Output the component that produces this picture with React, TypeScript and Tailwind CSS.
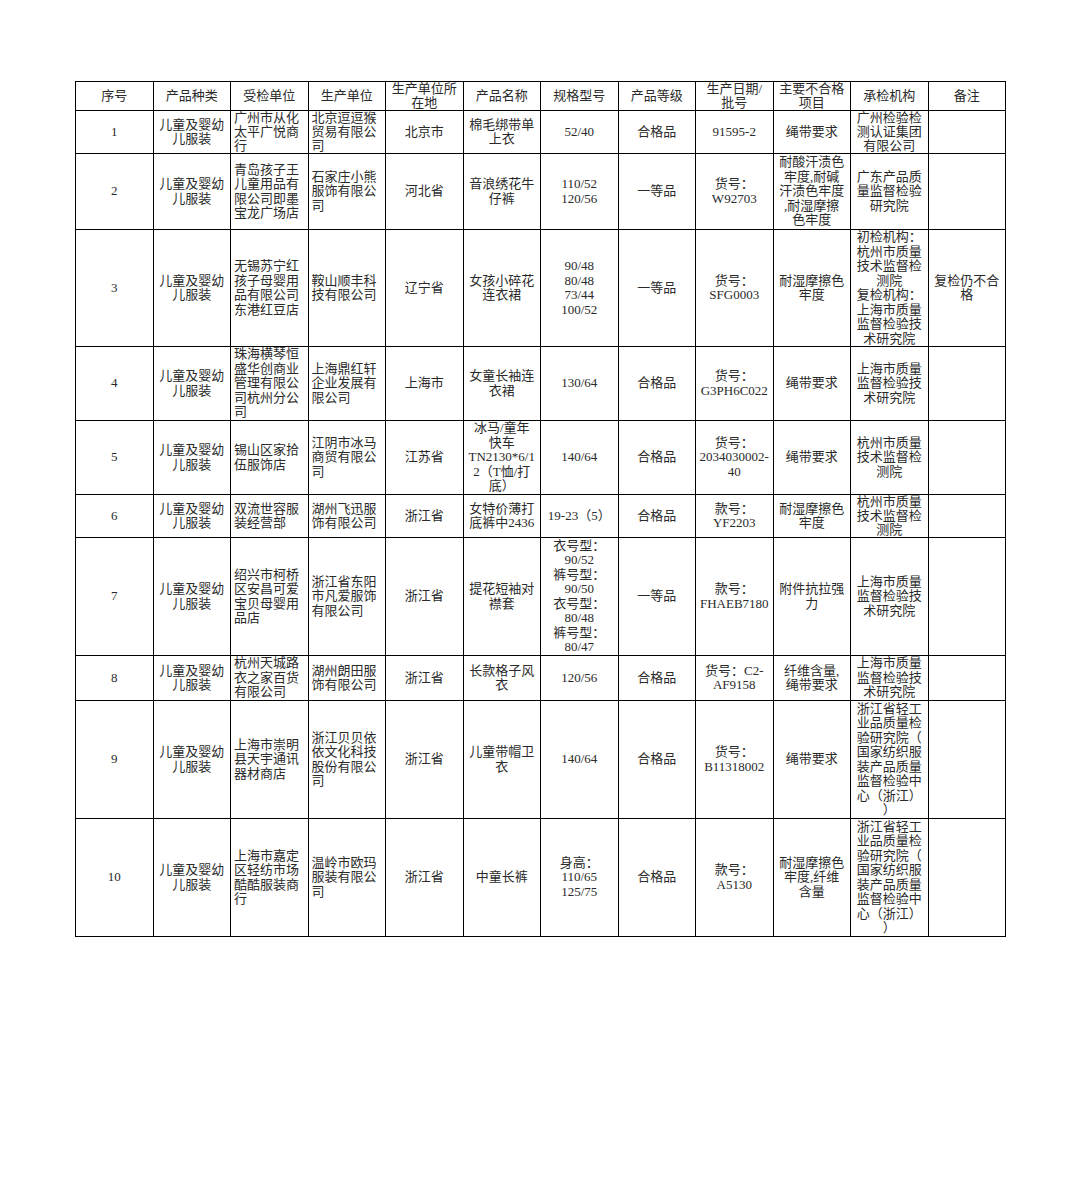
import React from "react";

const CAT = ["儿童及婴幼", "儿服装"];
const ZJ = ["浙江省轻工", "业品质量检", "验研究院（", "国家纺织服", "装产品质量", "监督检验中", "心（浙江）", "）"];
const SH = ["上海市质量", "监督检验技", "术研究院"];
const HZ = ["杭州市质量", "技术监督检", "测院"];

const ROW_H = [29, 43, 76, 117, 74, 74, 43, 118, 45, 118, 118];

const header: string[][] = [
  ["序号"],
  ["产品种类"],
  ["受检单位"],
  ["生产单位"],
  ["生产单位所", "在地"],
  ["产品名称"],
  ["规格型号"],
  ["产品等级"],
  ["生产日期/", "批号"],
  ["主要不合格", "项目"],
  ["承检机构"],
  ["备注"],
];

const rows: string[][][] = [
  [["1"], CAT, ["广州市从化", "太平广悦商", "行"], ["北京逗逗猴", "贸易有限公", "司"], ["北京市"], ["棉毛绑带单", "上衣"], ["52/40"], ["合格品"], ["91595-2"], ["绳带要求"], ["广州检验检", "测认证集团", "有限公司"], []],
  [["2"], CAT, ["青岛孩子王", "儿童用品有", "限公司即墨", "宝龙广场店"], ["石家庄小熊", "服饰有限公", "司"], ["河北省"], ["音浪绣花牛", "仔裤"], ["110/52", "120/56"], ["一等品"], ["货号：", "W92703"], ["耐酸汗渍色", "牢度,耐碱", "汗渍色牢度", ",耐湿摩擦", "色牢度"], ["广东产品质", "量监督检验", "研究院"], []],
  [["3"], CAT, ["无锡苏宁红", "孩子母婴用", "品有限公司", "东港红豆店"], ["鞍山顺丰科", "技有限公司"], ["辽宁省"], ["女孩小碎花", "连衣裙"], ["90/48", "80/48", "73/44", "100/52"], ["一等品"], ["货号：", "SFG0003"], ["耐湿摩擦色", "牢度"], ["初检机构：", "杭州市质量", "技术监督检", "测院", "复检机构：", "上海市质量", "监督检验技", "术研究院"], ["复检仍不合", "格"]],
  [["4"], CAT, ["珠海横琴恒", "盛华创商业", "管理有限公", "司杭州分公", "司"], ["上海鼎红轩", "企业发展有", "限公司"], ["上海市"], ["女童长袖连", "衣裙"], ["130/64"], ["合格品"], ["货号：", "G3PH6C022"], ["绳带要求"], SH, []],
  [["5"], CAT, ["锡山区家拾", "伍服饰店"], ["江阴市冰马", "商贸有限公", "司"], ["江苏省"], ["冰马/童年", "快车", "TN2130*6/1", "2（T恤/打", "底）"], ["140/64"], ["合格品"], ["货号：", "2034030002-", "40"], ["绳带要求"], HZ, []],
  [["6"], CAT, ["双流世容服", "装经营部"], ["湖州飞迅服", "饰有限公司"], ["浙江省"], ["女特价薄打", "底裤中2436"], ["19-23（5）"], ["合格品"], ["款号：", "YF2203"], ["耐湿摩擦色", "牢度"], HZ, []],
  [["7"], CAT, ["绍兴市柯桥", "区安昌可爱", "宝贝母婴用", "品店"], ["浙江省东阳", "市凡爱服饰", "有限公司"], ["浙江省"], ["提花短袖对", "襟套"], ["衣号型：", "90/52", "裤号型：", "90/50", "衣号型：", "80/48", "裤号型：", "80/47"], ["一等品"], ["款号：", "FHAEB7180"], ["附件抗拉强", "力"], SH, []],
  [["8"], CAT, ["杭州天城路", "衣之家百货", "有限公司"], ["湖州朗田服", "饰有限公司"], ["浙江省"], ["长款格子风", "衣"], ["120/56"], ["合格品"], ["货号：C2-", "AF9158"], ["纤维含量,", "绳带要求"], SH, []],
  [["9"], CAT, ["上海市崇明", "县天宇通讯", "器材商店"], ["浙江贝贝依", "依文化科技", "股份有限公", "司"], ["浙江省"], ["儿童带帽卫", "衣"], ["140/64"], ["合格品"], ["货号：", "B11318002"], ["绳带要求"], ZJ, []],
  [["10"], CAT, ["上海市嘉定", "区轻纺市场", "酷酷服装商", "行"], ["温岭市欧玛", "服装有限公", "司"], ["浙江省"], ["中童长裤"], ["身高：", "110/65", "125/75"], ["合格品"], ["款号：", "A5130"], ["耐湿摩擦色", "牢度,纤维", "含量"], ZJ, []],
];

function Cell({ lines, left, tight }: { lines: string[]; left: boolean; tight: boolean }) {
  const inner =
    (left ? "whitespace-nowrap text-left" : "whitespace-nowrap text-center") +
    (tight ? " leading-[14px]" : " leading-[14.5px]");
  return (
    <div
      className={
        left
          ? "flex items-center justify-start overflow-hidden border-r border-b border-black pl-[3px]"
          : "flex items-center justify-center overflow-hidden border-r border-b border-black"
      }
    >
      <div className={inner}>
        {lines.map((l, i) => (
          <div key={i}>{l}</div>
        ))}
      </div>
    </div>
  );
}

export default function App() {
  return (
    <div className="w-[1080px] h-[1184px] bg-white pt-[81px] pl-[75px]">
      <div
        className="grid w-[931px] grid-cols-[repeat(12,77.5px)] grid-rows-[29px_43px_76px_117px_74px_74px_43px_118px_45px_118px_118px] border-l border-t border-black text-[13px] text-[#2a2a2a]"
        style={{ fontFamily: '"Liberation Serif", "Noto Sans CJK SC", serif' }}
      >
        {header.map((h, i) => (
          <Cell key={"h" + i} lines={h} left={false} tight={h.length * 14.5 > ROW_H[0] - 1} />
        ))}
        {rows.map((r, ri) =>
          r.map((c, ci) => (
            <Cell
              key={ri + "-" + ci}
              lines={c}
              left={ci === 2 || ci === 3}
              tight={c.length * 14.5 > ROW_H[ri + 1] - 1}
            />
          ))
        )}
      </div>
    </div>
  );
}
